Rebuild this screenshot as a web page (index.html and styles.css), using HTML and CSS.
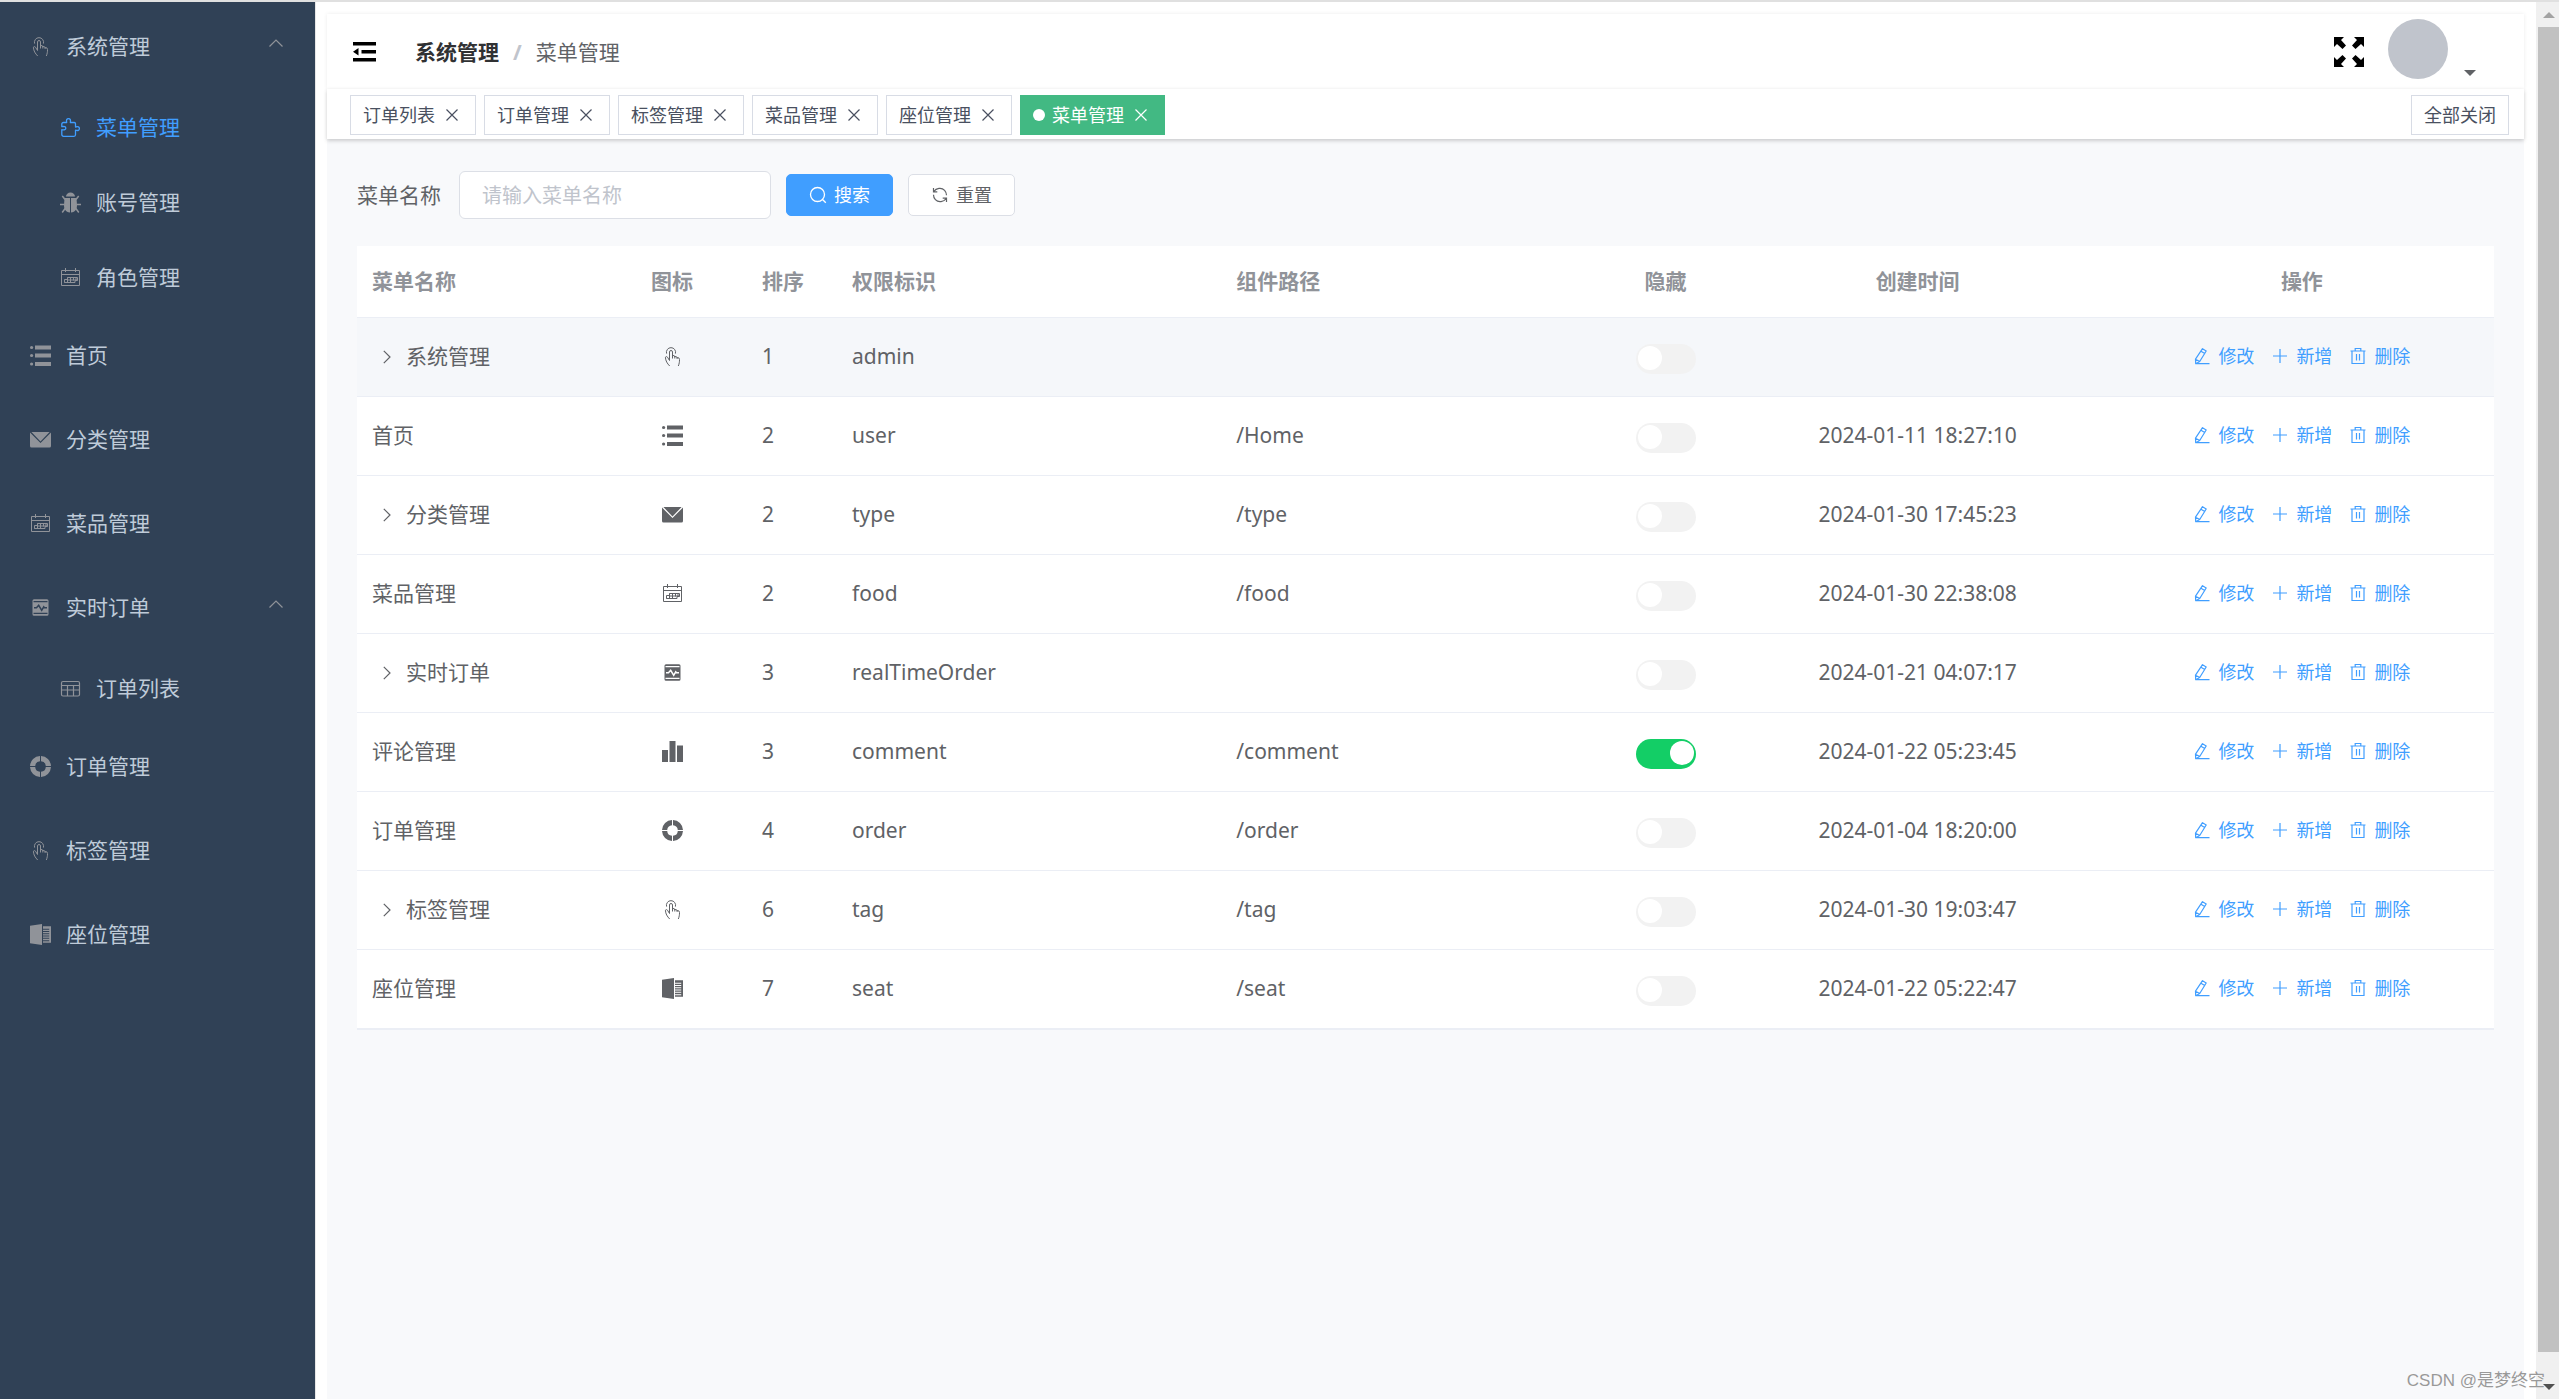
FILE: index.html
```html
<!DOCTYPE html>
<html lang="zh-CN">
<head>
<meta charset="utf-8">
<title>菜单管理</title>
<link rel="stylesheet" href="styles.css">
</head>
<body>
<svg class="sprite" aria-hidden="true">
  <symbol id="pointer" viewBox="0 0 21 21"><path fill="none" stroke="currentColor" stroke-width="1" d="M4.6 7.6A4.6 4.6 0 1 1 13.4 7.6M7.5 14.5V6a1.5 1.5 0 0 1 3 0v6.500M10.500 9.500q2.300-.5 2.300 1.500v1.500M12.800 10.500q2.300-.3 2.300 1.500v1M15.100 11.500q2.400-.2 2.400 2c0 2.500-.2 4-1.200 6.500M7.500 14.500l-2-3.300q-1.200-1.300-2.100 0c.2 3.800 1.800 6.300 4.300 8.800"/></symbol>
  <symbol id="puzzle" viewBox="0 0 21 21"><path fill="none" stroke="currentColor" stroke-width="1.300" stroke-linejoin="round" d="M3.500 5.500h3.200q-.9-3.800 1.800-3.800t1.800 3.800h4q1.200 0 1.200 1.200v3.300q3.900-1 3.900 1.600t-3.900 1.600v4.600q0 1.500-1.500 1.500H3.600q-1.800 0-1.800-1.800v-4.800q4 .8 4-1.500t-4-1.500V7q0-1.500 1.700-1.500z"/></symbol>
  <symbol id="bug" viewBox="0 0 21 21"><path fill="currentColor" d="M6 4.600a4.500 4 0 0 1 9 0zM4.500 6H10v14.500C5.500 20 4 17 4 13zM11 6h5.500l.5 7c0 4-1.500 7-6 7.500z"/><path fill="none" stroke="currentColor" stroke-width="1.500" d="M5 7.500 2.300 4M16 7.500 18.700 4M4.500 12.500H0M16.500 12.500H21M5.500 16l-3.300 4.500M15.500 16l3.300 4.500"/></symbol>
  <symbol id="calendar" viewBox="0 0 21 21"><path fill="none" stroke="currentColor" stroke-width="1" d="M1.500 3.500h18v15h-18zM1.500 7.500h18M5.500 1v4M15.500 1v4M7.500 10.500h10v3h-2.500v2H4.500v-3h3zM4.500 15.500h3v-5M10.500 10.500v5M13.500 10.500v3M7.500 13h10M16 10.500v3"/></symbol>
  <symbol id="list" viewBox="0 0 21 21"><path fill="currentColor" d="M5 .5h16v4H5zM5 8.500h16v4H5zM5 17h16v4H5z"/><circle cx="1.600" cy="2.500" r="1.600" fill="currentColor"/><circle cx="1.600" cy="10.500" r="1.600" fill="currentColor"/><circle cx="1.600" cy="19" r="1.600" fill="currentColor"/></symbol>
  <symbol id="mail" viewBox="0 0 21 21"><path fill="currentColor" d="M1.400 3 10.500 12.500 19.600 3zM0 3.500v13.500q0 1.500 1.500 1.500h18q1.500 0 1.500-1.500V3.500L10.500 14z"/></symbol>
  <symbol id="monitor" viewBox="0 0 21 21"><path fill="currentColor" fill-rule="evenodd" d="M4 2.300h13q1.500 0 1.500 1.500v13.400q0 1.500-1.500 1.500H4q-1.500 0-1.500-1.500V3.800Q2.500 2.300 4 2.300zM3.500 4v1.200h14V4zM3.500 15.800v1.200h14v-1.200z"/><path class="cutout" d="M4 10.800h2.500l2.200-2.500 3 5 2-3.500.8 1H17"/></symbol>
  <symbol id="grid" viewBox="0 0 21 21"><path fill="none" stroke="currentColor" stroke-width="1.200" d="M3 3.500h15q1.500 0 1.500 1.500v11.500q0 1.500-1.500 1.500H3q-1.500 0-1.500-1.500V5q0-1.500 1.500-1.500zM1.500 7.500h18M1.500 12h18M7.500 7.500V18M13.500 7.500V18"/></symbol>
  <symbol id="ring" viewBox="0 0 21 21"><path fill="currentColor" d="M10 0v5.200A5.300 5.300 0 0 0 5.200 10H0A10.500 10.500 0 0 1 10 0zM11 0v5.200A5.300 5.300 0 0 1 15.800 10H21A10.500 10.500 0 0 0 11 0zM10 21v-5.200A5.300 5.300 0 0 1 5.200 11H0A10.500 10.500 0 0 0 10 21zM11 21v-5.200A5.300 5.300 0 0 0 15.800 11H21A10.500 10.500 0 0 1 11 21z"/></symbol>
  <symbol id="notebook" viewBox="0 0 21 21"><path fill="currentColor" d="M0 1.800 12 0v21L0 19.200zM13 2.200h8v16.600h-8v-1.500h6.200v-1H13v-1.500h6.200v-1H13v-1.300h6.200v-1H13v-1.300h6.200v-1H13V8h6.200V7H13V5.700h6.200v-1H13z"/></symbol>
  <symbol id="bars" viewBox="0 0 21 21"><path fill="currentColor" d="M0 9h6v12H0zM7.500 0h6v21h-6zM15 4.500h6V21h-6z"/></symbol>
  <symbol id="up" viewBox="0 0 14 8"><path fill="none" stroke="currentColor" stroke-width="1.200" d="M.5 7.500 7 1l6.500 6.500"/></symbol>
  <symbol id="right" viewBox="0 0 8 14"><path fill="none" stroke="currentColor" stroke-width="1.200" d="M.8.800 7 7 .8 13.200"/></symbol>
  <symbol id="close" viewBox="0 0 12 12"><path fill="none" stroke="currentColor" stroke-width="1.200" d="M.5.500l11 11M11.500.500l-11 11"/></symbol>
  <symbol id="fold" viewBox="0 0 24 20"><path fill="currentColor" d="M0 0h23v3.500H0zM8.500 8h14.500v3.500H8.500zM0 16h23v3.500H0zM0 9.800 5.500 6v7.500z"/></symbol>
  <symbol id="full" viewBox="0 0 30 30"><path fill="currentColor" d="M0 0h10L7 3l5 5.500L8.500 12 3 7l-3 3zM30 0H20l3 3-5 5.500 3.500 3.500L27 7l3 3zM0 30h10l-3-3 5-5.500L8.500 18 3 23l-3-3zM30 30H20l3-3-5-5.500 3.500-3.500 5.500 5 3-3z"/></symbol>
  <symbol id="search" viewBox="0 0 18 18"><circle cx="8.500" cy="8.500" r="7" fill="none" stroke="currentColor" stroke-width="1.300"/><path stroke="currentColor" stroke-width="1.300" d="m13.500 13.500 3.300 3.300"/></symbol>
  <symbol id="refresh" viewBox="0 0 18 18"><path fill="none" stroke="currentColor" stroke-width="1.200" d="M2.500 2v3.800h3.800M2.800 5.500C5.200 2 10.500 1 13.600 4.300c1.300 1.400 1.900 3 1.900 5M15.500 16v-3.800h-3.800M15.200 12.500c-2.400 3.500-7.700 4.500-10.800 1.200C3.100 12.300 2.500 10.700 2.500 8.700"/></symbol>
  <symbol id="edit" viewBox="0 0 18 18"><path fill="none" stroke="currentColor" stroke-width="1.200" stroke-linejoin="round" d="M9.500 1.700 13.200 4 6.700 14.500l-4 2.200-.2-4.500zM8 4.200l3.700 2.300M2.700 16.700h13.800M2.500 12.200l4.200 2.300"/></symbol>
  <symbol id="plus" viewBox="0 0 18 18"><path stroke="currentColor" stroke-width="1.200" d="M9 2v14M2 9h14"/></symbol>
  <symbol id="trash" viewBox="0 0 18 18"><path fill="none" stroke="currentColor" stroke-width="1.200" d="M1.500 4h15M3 4v12.500h12V4M6.200 4V1.500h5.600V4M7.500 7v6.500M10.500 7v6.500"/></symbol>
</svg>
<div class="app">
  <nav class="sidebar" aria-label="主菜单">
    <button class="item" type="button"><svg class="icon"><use href="#pointer"/></svg><span>系统管理</span><svg class="arrow"><use href="#up"/></svg></button>
    <a class="item sub active" href="#"><svg class="icon"><use href="#puzzle"/></svg><span>菜单管理</span></a>
    <a class="item sub" href="#"><svg class="icon"><use href="#bug"/></svg><span>账号管理</span></a>
    <a class="item sub" href="#"><svg class="icon"><use href="#calendar"/></svg><span>角色管理</span></a>
    <a class="item" href="#"><svg class="icon"><use href="#list"/></svg><span>首页</span></a>
    <a class="item" href="#"><svg class="icon"><use href="#mail"/></svg><span>分类管理</span></a>
    <a class="item" href="#"><svg class="icon"><use href="#calendar"/></svg><span>菜品管理</span></a>
    <button class="item" type="button"><svg class="icon"><use href="#monitor"/></svg><span>实时订单</span><svg class="arrow"><use href="#up"/></svg></button>
    <a class="item sub" href="#"><svg class="icon"><use href="#grid"/></svg><span>订单列表</span></a>
    <a class="item" href="#"><svg class="icon"><use href="#ring"/></svg><span>订单管理</span></a>
    <a class="item" href="#"><svg class="icon"><use href="#pointer"/></svg><span>标签管理</span></a>
    <a class="item" href="#"><svg class="icon"><use href="#notebook"/></svg><span>座位管理</span></a>
  </nav>
  <div class="main">
    <header class="topbar">
      <button class="fold" type="button" aria-label="收起菜单"><svg><use href="#fold"/></svg></button>
      <div class="crumbs"><a href="#">系统管理</a><span class="slash">/</span><span>菜单管理</span></div>
      <button class="full" type="button" aria-label="全屏"><svg><use href="#full"/></svg></button>
      <button class="user" type="button" aria-label="用户"><span class="avatar"></span><span class="caret"></span></button>
    </header>
    <div class="tags">
      <a class="tag" href="#">订单列表<svg><use href="#close"/></svg></a>
      <a class="tag" href="#">订单管理<svg><use href="#close"/></svg></a>
      <a class="tag" href="#">标签管理<svg><use href="#close"/></svg></a>
      <a class="tag" href="#">菜品管理<svg><use href="#close"/></svg></a>
      <a class="tag" href="#">座位管理<svg><use href="#close"/></svg></a>
      <a class="tag current" href="#">菜单管理<svg><use href="#close"/></svg></a>
      <button class="tag close-all" type="button">全部关闭</button>
    </div>
    <main class="content">
      <form class="filter">
        <label for="menu-name">菜单名称</label>
        <input id="menu-name" type="text" placeholder="请输入菜单名称">
        <button class="btn primary" type="button"><svg><use href="#search"/></svg>搜索</button>
        <button class="btn" type="button"><svg><use href="#refresh"/></svg>重置</button>
      </form>
      <table class="grid">
        <colgroup><col class="c-name"><col class="c-icon"><col class="c-sort"><col><col><col class="c-hide"><col><col></colgroup>
        <thead><tr><th>菜单名称</th><th class="mid">图标</th><th>排序</th><th>权限标识</th><th>组件路径</th><th class="mid">隐藏</th><th class="mid">创建时间</th><th class="mid">操作</th></tr></thead>
        <tbody>
          <tr class="hover"><td><button class="expand" type="button" aria-label="展开"><svg><use href="#right"/></svg></button>系统管理</td><td><svg class="icon"><use href="#pointer"/></svg></td><td>1</td><td>admin</td><td></td><td class="toggle"><input type="checkbox" aria-label="隐藏"></td><td class="mid"></td><td><div class="ops"><button type="button"><svg><use href="#edit"/></svg>修改</button><button type="button"><svg><use href="#plus"/></svg>新增</button><button type="button"><svg><use href="#trash"/></svg>删除</button></div></td></tr>
          <tr><td>首页</td><td><svg class="icon"><use href="#list"/></svg></td><td>2</td><td>user</td><td>/Home</td><td class="toggle"><input type="checkbox" aria-label="隐藏"></td><td class="mid">2024-01-11 18:27:10</td><td><div class="ops"><button type="button"><svg><use href="#edit"/></svg>修改</button><button type="button"><svg><use href="#plus"/></svg>新增</button><button type="button"><svg><use href="#trash"/></svg>删除</button></div></td></tr>
          <tr><td><button class="expand" type="button" aria-label="展开"><svg><use href="#right"/></svg></button>分类管理</td><td><svg class="icon"><use href="#mail"/></svg></td><td>2</td><td>type</td><td>/type</td><td class="toggle"><input type="checkbox" aria-label="隐藏"></td><td class="mid">2024-01-30 17:45:23</td><td><div class="ops"><button type="button"><svg><use href="#edit"/></svg>修改</button><button type="button"><svg><use href="#plus"/></svg>新增</button><button type="button"><svg><use href="#trash"/></svg>删除</button></div></td></tr>
          <tr><td>菜品管理</td><td><svg class="icon"><use href="#calendar"/></svg></td><td>2</td><td>food</td><td>/food</td><td class="toggle"><input type="checkbox" aria-label="隐藏"></td><td class="mid">2024-01-30 22:38:08</td><td><div class="ops"><button type="button"><svg><use href="#edit"/></svg>修改</button><button type="button"><svg><use href="#plus"/></svg>新增</button><button type="button"><svg><use href="#trash"/></svg>删除</button></div></td></tr>
          <tr><td><button class="expand" type="button" aria-label="展开"><svg><use href="#right"/></svg></button>实时订单</td><td><svg class="icon"><use href="#monitor"/></svg></td><td>3</td><td>realTimeOrder</td><td></td><td class="toggle"><input type="checkbox" aria-label="隐藏"></td><td class="mid">2024-01-21 04:07:17</td><td><div class="ops"><button type="button"><svg><use href="#edit"/></svg>修改</button><button type="button"><svg><use href="#plus"/></svg>新增</button><button type="button"><svg><use href="#trash"/></svg>删除</button></div></td></tr>
          <tr><td>评论管理</td><td><svg class="icon"><use href="#bars"/></svg></td><td>3</td><td>comment</td><td>/comment</td><td class="toggle"><input type="checkbox" checked aria-label="隐藏"></td><td class="mid">2024-01-22 05:23:45</td><td><div class="ops"><button type="button"><svg><use href="#edit"/></svg>修改</button><button type="button"><svg><use href="#plus"/></svg>新增</button><button type="button"><svg><use href="#trash"/></svg>删除</button></div></td></tr>
          <tr><td>订单管理</td><td><svg class="icon"><use href="#ring"/></svg></td><td>4</td><td>order</td><td>/order</td><td class="toggle"><input type="checkbox" aria-label="隐藏"></td><td class="mid">2024-01-04 18:20:00</td><td><div class="ops"><button type="button"><svg><use href="#edit"/></svg>修改</button><button type="button"><svg><use href="#plus"/></svg>新增</button><button type="button"><svg><use href="#trash"/></svg>删除</button></div></td></tr>
          <tr><td><button class="expand" type="button" aria-label="展开"><svg><use href="#right"/></svg></button>标签管理</td><td><svg class="icon"><use href="#pointer"/></svg></td><td>6</td><td>tag</td><td>/tag</td><td class="toggle"><input type="checkbox" aria-label="隐藏"></td><td class="mid">2024-01-30 19:03:47</td><td><div class="ops"><button type="button"><svg><use href="#edit"/></svg>修改</button><button type="button"><svg><use href="#plus"/></svg>新增</button><button type="button"><svg><use href="#trash"/></svg>删除</button></div></td></tr>
          <tr><td>座位管理</td><td><svg class="icon"><use href="#notebook"/></svg></td><td>7</td><td>seat</td><td>/seat</td><td class="toggle"><input type="checkbox" aria-label="隐藏"></td><td class="mid">2024-01-22 05:22:47</td><td><div class="ops"><button type="button"><svg><use href="#edit"/></svg>修改</button><button type="button"><svg><use href="#plus"/></svg>新增</button><button type="button"><svg><use href="#trash"/></svg>删除</button></div></td></tr>
        </tbody>
      </table>
    </main>
  </div>
  <div class="scrollbar" aria-hidden="true"><span class="tri-up"></span><span class="thumb"></span><span class="tri-down"></span></div>
</div>
<div class="watermark">CSDN @是梦终空</div>
</body>
</html>
```
FILE: styles.css
```css
* { box-sizing: border-box; }

body {
  margin: 0;
  font: 21px/30px "Noto Sans", "Noto Sans CJK SC", sans-serif;
  color: #606266;
  background: #fff;
}

a { color: inherit; text-decoration: none; }

button {
  margin: 0;
  padding: 0;
  border: 0;
  background: none;
  color: inherit;
  font: inherit;
  cursor: pointer;
}

svg { display: block; flex: none; }
.sprite { position: absolute; width: 0; height: 0; }
.icon { width: 21px; height: 21px; }
.cutout { fill: none; stroke: var(--surface, #fff); stroke-width: 1.5; }

.app {
  display: flex;
  min-height: 100vh;
  border-top: 2px solid #e0e0e0;
}

/* sidebar */
.sidebar {
  --surface: #304156;
  flex: none;
  width: 315px;
  padding-top: 2px;
  background: var(--surface);
  color: #bfcbd9;
}
.item {
  display: flex;
  align-items: center;
  gap: 15px;
  width: 100%;
  height: 84px;
  padding: 0 30px;
}
.item .icon { color: #909399; }
.item.sub { height: 75px; padding: 3px 30px 0 60px; }
.item.active, .item.active .icon { color: #409eff; }
.arrow {
  width: 14px;
  height: 8px;
  margin: 0 2px 6px auto;
  color: #909399;
}

/* header */
.main {
  flex: 1;
  min-width: 0;
  display: flex;
  flex-direction: column;
  padding: 12px 12px 0 11px;
  border-left: 1px solid #e6e6e6;
}
.topbar {
  display: flex;
  align-items: center;
  height: 75px;
  padding: 0 48px 0 26px;
  box-shadow: 0 0 4px rgba(0, 0, 0, 0.08);
}
.fold, .fold svg { width: 24px; height: 20px; color: #000; }
.crumbs { display: flex; margin: 0 auto 0 38px; }
.crumbs a { font-weight: 700; color: #303133; }
.slash { padding: 0 14px; font-weight: 700; color: #c0c4cc; }
.full, .full svg { width: 30px; height: 30px; color: #000; }
.user { display: flex; align-items: flex-end; margin: 0 0 5px 24px; }
.avatar { width: 60px; height: 60px; border-radius: 50%; background: #c0c4cc; }
.caret {
  margin: 0 0 3px 16px;
  border: 6px solid transparent;
  border-top-color: #606266;
  border-bottom-width: 0;
}

.tags {
  position: relative;
  display: flex;
  align-items: center;
  gap: 8px;
  height: 50px;
  padding: 2px 15px 0 23px;
  background: #fff;
  box-shadow: 0 2px 4px rgba(0, 0, 0, 0.16), 0 0 4px rgba(0, 0, 0, 0.05);
}
.tag {
  display: flex;
  align-items: center;
  height: 40px;
  padding: 0 12px;
  border: 1px solid #d8dce5;
  background: #fff;
  color: #495060;
  font-size: 18px;
  white-space: nowrap;
}
.tag svg { width: 12px; height: 12px; margin: 0 5px 0 11px; }
.tag.current { border-color: #42b983; background: #42b983; color: #fff; }
.tag.current::before {
  content: "";
  width: 12px;
  height: 12px;
  margin-right: 7px;
  border-radius: 50%;
  background: #fff;
}
.close-all { margin-left: auto; }

/* content */
.content { flex: 1; padding: 32px 30px; background: #f8f9fb; }
.filter {
  display: flex;
  align-items: center;
  gap: 15px;
  margin-bottom: 27px;
}
.filter label { margin-right: 3px; }
.filter input {
  width: 312px;
  height: 48px;
  padding: 0 22px;
  border: 1px solid #dcdfe6;
  border-radius: 6px;
  background: #fff;
  color: #606266;
  font: inherit;
  font-size: 20px;
}
.filter input::placeholder { color: #c0c4cc; }
.btn {
  display: flex;
  align-items: center;
  gap: 7px;
  height: 42px;
  padding: 0 22px;
  border: 1px solid #dcdfe6;
  border-radius: 5px;
  background: #fff;
  font-size: 18px;
}
.btn svg, .ops svg { width: 18px; height: 18px; }
.primary { border-color: #409eff; background: #409eff; color: #fff; }

/* table */
.grid {
  width: 100%;
  table-layout: fixed;
  border-spacing: 0;
  background: #fff;
  border-bottom: 1px solid #ebeef5;
}
.c-name { width: 240px; }
.c-icon { width: 150px; }
.c-sort { width: 90px; }
.c-hide { width: 120px; }
.grid th, .grid td {
  height: 79px;
  padding: 0 15px 2px;
  border-bottom: 1px solid #ebeef5;
  text-align: left;
  vertical-align: middle;
}
.grid th { height: 72px; color: #909399; font-weight: 700; }
.grid .mid { text-align: center; }
.grid .icon { margin: 0 auto; }
.hover td { background: #f5f7fa; }
.expand {
  display: inline-flex;
  justify-content: center;
  width: 30px;
  margin-right: 4px;
}
.expand svg { width: 8px; height: 14px; }

.grid .toggle { padding: 4px 0 0; }
.toggle input {
  appearance: none;
  display: flex;
  width: 60px;
  height: 30px;
  margin: 0 auto;
  padding: 2px;
  border-radius: 15px;
  background: #f2f2f2;
}
.toggle input::before {
  content: "";
  width: 24px;
  height: 24px;
  border-radius: 50%;
  background: #fff;
}
.toggle input:checked { justify-content: flex-end; background: #13ce66; }

.ops { display: flex; justify-content: center; gap: 17px; }
.ops button {
  display: flex;
  align-items: center;
  gap: 7px;
  color: #409eff;
  font-size: 18px;
}

/* scrollbar */
.scrollbar {
  display: flex;
  flex-direction: column;
  align-items: center;
  flex: none;
  width: 23px;
  padding: 10px 0 9px 2px;
  background: #f0f0f0;
}
.thumb { flex: 1; width: 100%; margin: 9px 0 32px; background: #c1c1c1; }
.tri-up, .tri-down { border: 6px solid transparent; }
.tri-up { border-top-width: 0; border-bottom-color: #a3a3a3; }
.tri-down { border-bottom-width: 0; border-top-color: #505050; }

.watermark {
  position: absolute;
  right: 14px;
  bottom: 3px;
  color: #999;
  font: 17px/30px "Liberation Sans", "Noto Sans CJK SC", sans-serif;
  text-shadow: 0 0 1px #fff;
}
```
